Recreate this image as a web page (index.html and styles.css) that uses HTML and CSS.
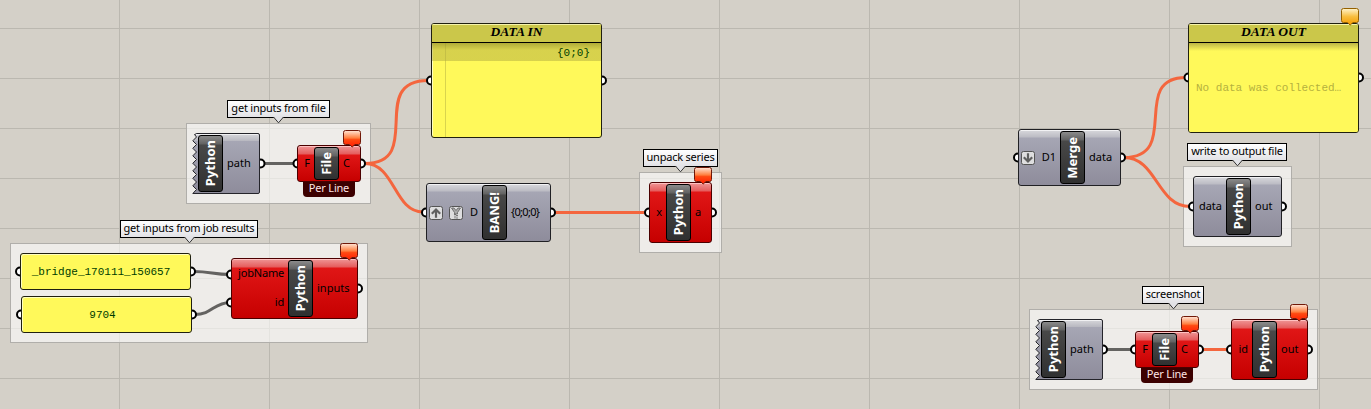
FILE: index.html
```html
<!DOCTYPE html>
<html lang="en">
<head>
<meta charset="utf-8">
<title>Node canvas</title>
<link rel="stylesheet" href="styles.css">
</head>
<body>
<main class="canvas">
  <section class="group g-file"></section>
  <section class="group g-job"></section>
  <section class="group g-unpack"></section>
  <section class="group g-write"></section>
  <section class="group g-shot"></section>

  <svg class="wires" width="1371" height="409" viewBox="0 0 1371 409">
    <defs>
      <linearGradient id="steel" x1="0" y1="0" x2="0" y2="1">
        <stop offset="0" stop-color="#d8d8dc"/><stop offset=".12" stop-color="#b9b9c1"/>
        <stop offset=".13" stop-color="#a6a6b4"/><stop offset="1" stop-color="#8e8c9b"/>
      </linearGradient>
      <g id="jagged">
        <path d="M5 .5H66Q67.500 .5 67.500 2V59Q67.500 60.500 66 60.500H.8L4.500 56.500L.8 52.800L4.500 49L.8 45.300L4.500 41.500L.8 37.800L4.500 34L.8 30.300L4.500 26.500L.8 22.800L4.500 19L.8 15.300L4.500 11.500L.8 7.800L4.500 4L2.500 1.500Z" fill="url(#steel)" stroke="#24242a"/>
        <path d="M4 1.500H66" stroke="#f0f0f2" fill="none"/>
      </g>
    </defs>
    <g class="wire gray">
      <path d="M264 163.500H294"/>
      <path d="M194 271.500C210 271.500 214 274.500 230 274.500"/>
      <path d="M195 314.500C212 314.500 214 302.500 230 302.500"/>
      <path d="M1106 349.500H1132"/>
    </g>
    <g class="wire hot">
      <path d="M365 163.500C425 163.500 367 80.500 428 80.500"/>
      <path d="M365 163.500C395 163.500 394 212 423 212"/>
      <path d="M554 212.500H646"/>
      <path d="M1124 157.500C1182 157.500 1129 77.500 1186 77.500"/>
      <path d="M1124 157.500C1157 157.500 1157 206.500 1190 206.500"/>
      <path d="M1202 349.500H1229"/>
    </g>
    <g class="ports">
      <circle cx="260.500" cy="163.500" r="4"/><circle cx="297.500" cy="163.500" r="4"/><circle cx="361" cy="163.500" r="4"/>
      <circle cx="431" cy="80.500" r="4"/><circle cx="602" cy="80.500" r="4"/>
      <circle cx="426" cy="212.500" r="4"/><circle cx="551" cy="212.500" r="4"/>
      <circle cx="649" cy="212.500" r="4"/><circle cx="712" cy="212.500" r="4"/>
      <circle cx="20" cy="271.500" r="4"/><circle cx="191" cy="271.500" r="4"/>
      <circle cx="21" cy="314.500" r="4"/><circle cx="192" cy="314.500" r="4"/>
      <circle cx="231" cy="274.500" r="4"/><circle cx="231" cy="302.500" r="4"/><circle cx="358" cy="288.500" r="4"/>
      <circle cx="1018" cy="157.500" r="4"/><circle cx="1121" cy="157.500" r="4"/>
      <circle cx="1188.500" cy="77.500" r="4"/><circle cx="1359" cy="77.500" r="4"/>
      <circle cx="1193" cy="206.500" r="4"/><circle cx="1282" cy="206.500" r="4"/>
      <circle cx="1103" cy="349.500" r="4"/><circle cx="1135" cy="349.500" r="4"/><circle cx="1199" cy="349.500" r="4"/>
      <circle cx="1231" cy="349.500" r="4"/><circle cx="1308" cy="349.500" r="4"/>
    </g>
    <use href="#jagged" x="192" y="133"/>
    <use href="#jagged" x="1035" y="319"/>
  </svg>

  <div class="note n-file"><span>get inputs from file</span><svg class="tail" viewBox="0 0 11 7"><path d="M.5 0L5.500 5.800L10.500 0"/></svg></div>
  <div class="note n-job"><span>get inputs from job results</span><svg class="tail" viewBox="0 0 11 7"><path d="M.5 0L5.500 5.800L10.500 0"/></svg></div>
  <div class="note n-unpack"><span>unpack series</span><svg class="tail" viewBox="0 0 11 7"><path d="M.5 0L5.500 5.800L10.500 0"/></svg></div>
  <div class="note n-write"><span>write to output file</span><svg class="tail" viewBox="0 0 11 7"><path d="M.5 0L5.500 5.800L10.500 0"/></svg></div>
  <div class="note n-shot"><span>screenshot</span><svg class="tail" viewBox="0 0 11 7"><path d="M.5 0L5.500 5.800L10.500 0"/></svg></div>

  <article class="node bare path-a"><div class="in"></div><div class="core"><b>Python</b></div><div class="out"><span>path</span></div></article>
  <article class="node bare path-b"><div class="in"></div><div class="core"><b>Python</b></div><div class="out"><span>path</span></div></article>

  <article class="node red file-a"><div class="in"><span>F</span></div><div class="core"><b>File</b></div><div class="out"><span>C</span></div></article>
  <div class="tag tag-a">Per Line</div>
  <article class="node red file-b"><div class="in"><span>F</span></div><div class="core"><b>File</b></div><div class="out"><span>C</span></div></article>
  <div class="tag tag-b">Per Line</div>

  <article class="node red job"><div class="in two"><span>jobName</span><span>id</span></div><div class="core"><b>Python</b></div><div class="out"><span>inputs</span></div></article>
  <article class="node red unpack"><div class="in"><span>x</span></div><div class="core"><b>Python</b></div><div class="out"><span>a</span></div></article>
  <article class="node red shot"><div class="in"><span>id</span></div><div class="core"><b>Python</b></div><div class="out"><span>out</span></div></article>

  <article class="node steel bang">
    <div class="in icons">
      <svg class="ico" viewBox="0 0 14 14"><rect x=".5" y=".5" width="13" height="13" rx="2"/><path d="M7 11.800V3.500M2.800 7.700L7 3.500L11.200 7.700"/></svg>
      <svg class="ico" viewBox="0 0 14 14"><rect x=".5" y=".5" width="13" height="13" rx="2"/><path class="funnel" d="M2.500 2H5L7 4.500L9 2H11.500L8.500 6.500V8H5.500V6.500Z"/><path class="dots" d="M6 8V13M8 9V13"/></svg>
      <span>D</span>
    </div><div class="core"><b>BANG!</b></div><div class="out"><span class="tight">{0;0;0}</span></div>
  </article>
  <article class="node steel merge">
    <div class="in icons">
      <svg class="ico" viewBox="0 0 14 14"><rect x=".5" y=".5" width="13" height="13" rx="2"/><path d="M7 2.200V10.500M2.800 6.300L7 10.500L11.200 6.300"/></svg>
      <span>D1</span>
    </div><div class="core"><b>Merge</b></div><div class="out"><span>data</span></div>
  </article>
  <article class="node steel write"><div class="in"><span>data</span></div><div class="core"><b>Python</b></div><div class="out"><span>out</span></div></article>

  <article class="panel data-in"><h2>DATA IN</h2><div class="body"><p class="branch">{0;0}</p></div></article>
  <article class="panel data-out"><h2>DATA OUT</h2><div class="body empty"><p>No data was collected…</p></div></article>
  <article class="panel value bridge"><span>_bridge_170111_150657</span></article>
  <article class="panel value number"><span>9704</span></article>

  <svg class="balloons" width="1371" height="409" viewBox="0 0 1371 409">
    <defs>
      <linearGradient id="hot" x1="0" y1="0" x2="0" y2="1"><stop offset="0" stop-color="#ffe6d8"/><stop offset=".45" stop-color="#ff8040"/><stop offset=".55" stop-color="#ff4a12"/><stop offset="1" stop-color="#ff1c00"/></linearGradient>
      <linearGradient id="warn" x1="0" y1="0" x2="0" y2="1"><stop offset="0" stop-color="#fff4cc"/><stop offset=".5" stop-color="#f8bd3c"/><stop offset="1" stop-color="#f59a00"/></linearGradient>
      <path id="balloon" d="M2.500 .5H15.500Q17.500 .5 17.500 2.500V12.500Q17.500 14.500 15.500 14.500H12L9.200 17L6.400 14.500H2.500Q.5 14.500 .5 12.500V2.500Q.5 .5 2.500 .5Z"/>
    </defs>
    <g fill="url(#hot)" stroke="#701808">
      <use href="#balloon" x="343" y="130"/><use href="#balloon" x="340" y="243"/><use href="#balloon" x="694" y="167"/>
      <use href="#balloon" x="1181" y="316"/><use href="#balloon" x="1290" y="304"/>
    </g>
    <use href="#balloon" x="1341" y="8" fill="url(#warn)" stroke="#946000"/>
  </svg>
</main>
</body>
</html>
```
FILE: styles.css
```css
* { box-sizing: border-box; }
body { margin: 0; }
.canvas {
  position: relative;
  width: 1371px;
  height: 409px;
  overflow: hidden;
  background-color: #d4d0c8;
  background-image:
    linear-gradient(90deg, transparent 119px, #bbb8b0 119px, #bbb8b0 120px, transparent 120px),
    linear-gradient(transparent 28px, #bbb8b0 28px, #bbb8b0 29px, transparent 29px);
  background-size: 150px 409px, 1371px 50px;
  font: 11px/14px "Noto Sans", "Open Sans", sans-serif;
  color: #000;
}
.wires, .balloons { position: absolute; left: 0; top: 0; }
.wire { fill: none; stroke-width: 3; }
.gray { stroke: #646361; }
.hot { stroke: #f4663e; }
.ports { fill: #fff; stroke: #000; stroke-width: 2; }

.group { position: absolute; background: rgba(255, 255, 255, .6); border: 1px solid #b0aeaa; }
.g-file { left: 186px; top: 123px; width: 185px; height: 81px; }
.g-job { left: 10px; top: 243px; width: 358px; height: 100px; }
.g-unpack { left: 639px; top: 172px; width: 83px; height: 81px; }
.g-write { left: 1183px; top: 166px; width: 109px; height: 81px; }
.g-shot { left: 1029px; top: 309px; width: 289px; height: 81px; }

.note {
  position: absolute;
  display: flex;
  justify-content: center;
  height: 18px;
  border: 1px solid #000;
  background: linear-gradient(#fff, #e2e2e6);
  line-height: 14px;
  letter-spacing: -.22px;
  white-space: nowrap;
}
.tail { position: absolute; left: calc(50% - 5.5px); top: 16px; width: 11px; height: 7px; }
.tail path { fill: #e2e2e6; stroke: #333; }
.n-file { left: 227px; top: 100px; width: 103px; }
.n-job { left: 120px; top: 220px; width: 138px; }
.n-unpack { left: 643px; top: 149px; width: 75px; }
.n-write { left: 1187px; top: 143px; width: 100px; }
.n-shot { left: 1142px; top: 286px; width: 62px; }

.node {
  position: absolute;
  display: grid;
  grid-template-columns: var(--lead) 25px 1fr;
  padding: 1px 0;
  border: 1px solid #202024;
  border-radius: 3px;
  white-space: nowrap;
}
.steel {
  background: linear-gradient(#d8d8dc, #bcbcc4 7px, #a6a6b4 8px, #8e8c9b);
  box-shadow: inset 0 1px #f2f2f4;
}
.red {
  border-color: #4b0000;
  background: linear-gradient(#ef9696, #e55c5c 8px, #e01616 9px, #c60000);
  box-shadow: inset 0 1px #ffc0c0;
}
.bare { border-color: transparent; }
.in, .out { display: flex; align-items: center; }
.in { justify-content: flex-end; padding-right: 4px; }
.out { padding-left: 4px; }
.in span, .out span { position: relative; top: -1px; }
.in.two { flex-direction: column; align-items: flex-end; justify-content: space-around; letter-spacing: -.2px; }
.in.icons { justify-content: flex-start; gap: 6px; padding-left: 2px; }
.in.icons span { margin-left: auto; }
.tight { letter-spacing: -.7px; }
.out .tight { letter-spacing: -.7px; }
.ico { width: 14px; height: 14px; }
.ico rect { fill: #dededf; stroke: #555; }
.ico path { fill: none; stroke: #606060; stroke-width: 2.2; }
.ico .funnel { fill: #aaa; stroke: #606060; stroke-width: .8; }
.ico .dots { stroke-width: 1.6; stroke-dasharray: 1.2 1.2; }
.core {
  display: flex;
  align-items: center;
  justify-content: center;
  border: 1px solid #000;
  border-radius: 3px;
  background: linear-gradient(#8b8b8b, #626262 8px, #484848 9px, #303030);
}
.core b {
  writing-mode: vertical-rl;
  transform: rotate(180deg);
  margin-right: 2px;
  color: #fff;
  font: bold 13px/20px "Noto Sans", sans-serif;
}
.path-a { --lead: 5px; left: 192px; top: 133px; width: 68px; height: 61px; }
.path-b { --lead: 5px; left: 1035px; top: 319px; width: 68px; height: 61px; }
.file-a { --lead: 16px; left: 297px; top: 145px; width: 64px; height: 37px; }
.file-b { --lead: 16px; left: 1135px; top: 331px; width: 64px; height: 37px; }
.job { --lead: 56px; left: 231px; top: 258px; width: 127px; height: 61px; }
.unpack { --lead: 16px; left: 649px; top: 182px; width: 63px; height: 61px; }
.shot { --lead: 20px; left: 1231px; top: 319px; width: 77px; height: 61px; }
.bang { --lead: 55px; left: 426px; top: 183px; width: 125px; height: 59px; }
.merge { --lead: 41px; left: 1018px; top: 129px; width: 103px; height: 57px; }
.write { --lead: 32px; left: 1193px; top: 176px; width: 89px; height: 61px; }

.tag {
  position: absolute;
  width: 52px;
  height: 15px;
  border-radius: 0 0 4px 4px;
  background: #3c0000;
  color: #ffe4e4;
  line-height: 12px;
  letter-spacing: -.2px;
  text-align: center;
  white-space: nowrap;
}
.tag-a { left: 303px; top: 182px; }
.tag-b { left: 1141px; top: 368px; }

.panel {
  position: absolute;
  border: 1px solid #202010;
  border-radius: 3px;
  overflow: hidden;
  background: #fff95a;
  box-shadow: inset 1px 1px #ffffc0;
  color: #003c00;
  font: 11px/14px "Liberation Mono", monospace;
}
.panel h2 {
  margin: 0;
  height: 19px;
  border-bottom: 1px solid #000;
  background: #cbc74a;
  box-shadow: inset 0 1px #f6f4ac;
  color: #000;
  font: italic bold 13.5px/15px "Liberation Serif", serif;
  text-align: center;
}
.panel p { margin: 0; }
.data-in { left: 431px; top: 23px; width: 171px; height: 115px; }
.data-out { left: 1188px; top: 23px; width: 171px; height: 110px; }
.data-in .body { height: 100%; background: linear-gradient(90deg, transparent 13px, #d9d44d 13px, #d9d44d 14px, transparent 14px); }
.data-in .branch { height: 18px; padding: 3px 11px 0 0; text-align: right; background: linear-gradient(rgba(150, 145, 45, .75), rgba(176, 171, 63, .5) 7px); }
.empty { height: 90px; padding: 38px 0 0 7px; background: linear-gradient(#bbb545, #fff95a 8px); color: #b5b13e; white-space: nowrap; }
.value { display: flex; justify-content: center; padding-top: 11px; width: 171px; height: 37px; }
.bridge { left: 20px; top: 253px; padding-right: 9px; }
.number { left: 21px; top: 296px; padding-right: 8px; }
```
